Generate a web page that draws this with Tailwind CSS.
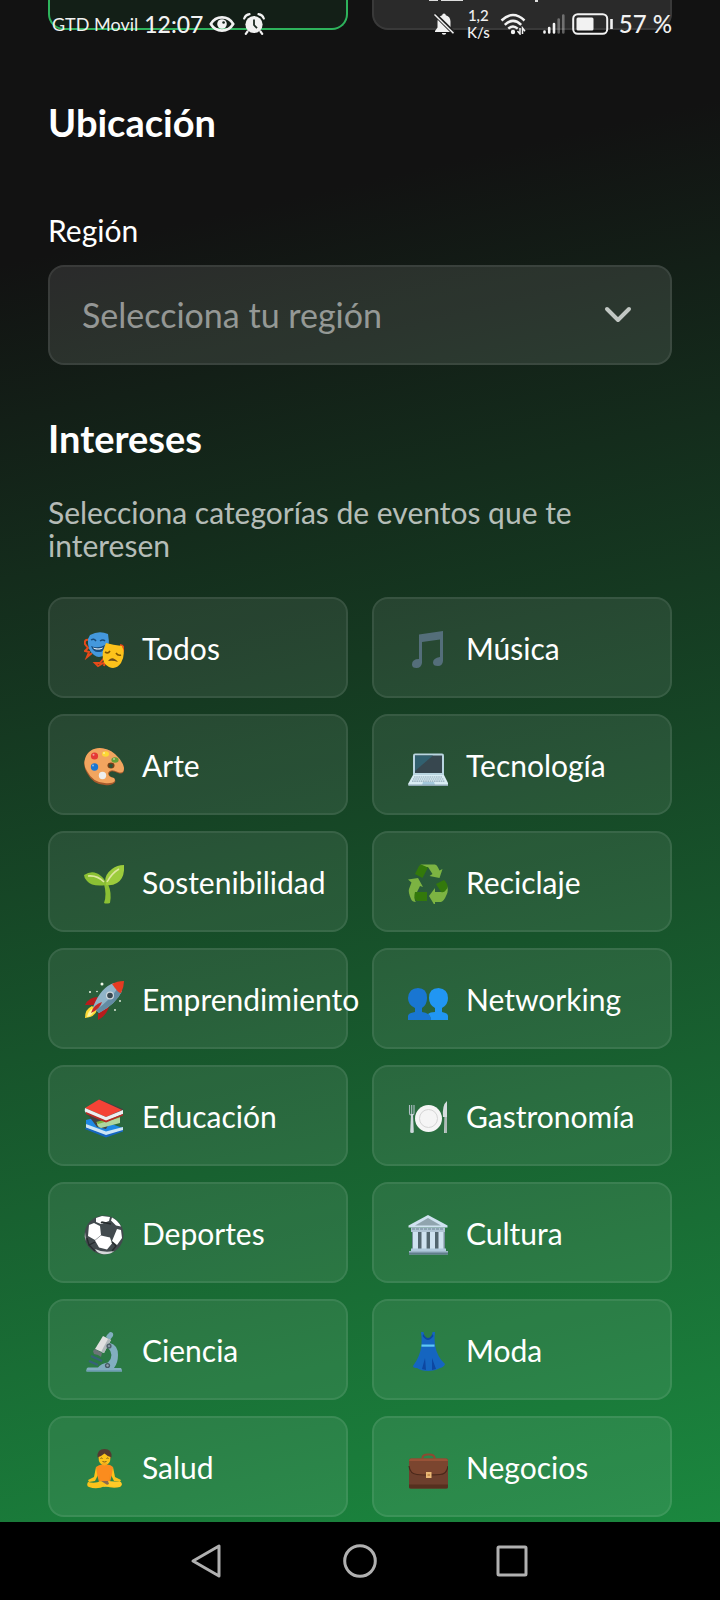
<!DOCTYPE html>
<html lang="es">
<head>
<meta charset="utf-8">
<meta name="viewport" content="width=device-width, initial-scale=1">
<title>Ubicación e intereses</title>
<script src="https://cdn.jsdelivr.net/npm/@tailwindcss/browser@4"></script>
</head>
<body class="relative flex min-h-screen flex-col overflow-x-hidden bg-[linear-gradient(167deg,#121212_15%,#1b883f_96%)] font-['Lato','Open_Sans',sans-serif] text-white">

<!-- Status bar over the scrolled content -->
<header class="absolute inset-x-0 top-0 flex h-12 items-center justify-between pr-12 pl-[52px] text-[#f2f2f2]">
  <div class="flex items-center">
    <span class="text-[18px] leading-6">GTD Movil</span>
    <span class="ml-[6px] text-[23px] leading-6 font-medium">12:07</span>
    <svg class="ml-[6px] h-[18px] w-[26px]" viewBox="0 0 26 18" fill="none"><path d="M1.800 9C7 .2 19 .2 24.200 9 19 17.800 7 17.800 1.800 9Z" stroke="currentColor" stroke-width="2.600"/><circle cx="13" cy="9" r="4.800" fill="currentColor"/><circle cx="14.600" cy="7.500" r="1.300" fill="#13251b"/></svg>
    <svg class="ml-2 h-[22px] w-[22px]" viewBox="0 0 22 22" fill="none"><circle cx="11" cy="11.500" r="8.600" fill="currentColor"/><path d="M1.200 5.500Q2.500 1.800 6.500 1.200M20.800 5.500Q19.500 1.800 15.500 1.200M4.500 18.500 2.800 20.800M17.500 18.500l1.700 2.300" stroke="currentColor" stroke-width="2.200" stroke-linecap="round"/><path d="M11 6.500v5.500l3 3.200" stroke="#1c2a22" stroke-width="1.800"/></svg>
  </div>
  <div class="flex items-center">
    <svg class="h-[22px] w-[22px]" viewBox="0 0 22 22" fill="none"><path d="M11 .5a1.800 1.800 0 0 1 1.800 1.700C16 3 17.500 5.500 17.500 8.500v6L20 18v1H2v-1l2.500-3.500v-6C4.500 5.500 6 3 9.200 2.200A1.800 1.800 0 0 1 11 .5ZM8.800 20h4.400a2.200 1.800 0 0 1-4.400 0Z" fill="currentColor"/><path d="M1.800 1.200 20.800 20" stroke="#222" stroke-width="4"/><path d="M1.500 1.500 20.500 20.300" stroke="currentColor" stroke-width="1.500"/></svg>
    <span class="ml-3 text-center text-[15px] leading-[17px] font-medium">1,2<br>K/s</span>
    <svg class="ml-[10px] h-[22px] w-[26px]" viewBox="0 0 26 22" fill="none"><path d="M1.500 7.500Q13-3.500 24.500 7.500M4.800 11.800Q13 4 21.200 11.800M8.300 15.700Q13 11.400 17.700 15.700" stroke="currentColor" stroke-width="2.500"/><circle cx="13" cy="19" r="2.200" fill="currentColor"/><path d="M20 15v6l-2.500-3M22.500 21v-6l2.500 3.200" stroke="currentColor" stroke-width="1.500"/></svg>
    <svg class="ml-[17px] h-[22px] w-[22px]" viewBox="0 0 22 22" stroke="currentColor" stroke-width="2.600" stroke-linecap="round"><path d="M1.500 18.500v1M6.200 15v4.500M11 11v8.500"/><path d="M15.700 6.500v13M20.300 2.500v17" opacity=".35"/></svg>
    <svg class="ml-[7px] h-[22px] w-[42px]" viewBox="0 0 42 22" fill="none"><rect x="1.200" y="1.200" width="34" height="19.600" rx="4.500" stroke="currentColor" stroke-width="2"/><rect x="4.500" y="4.500" width="17" height="13" rx="1.500" fill="currentColor"/><path d="M39.500 6v10" stroke="currentColor" stroke-width="2.600"/></svg>
    <span class="ml-[5px] text-[24px] leading-6 font-medium">57 %</span>
  </div>
</header>

<main class="px-12">
  <!-- Lower ends of the scrolled-away cards -->
  <div class="grid grid-cols-2 gap-6">
    <div class="h-[30px] rounded-b-2xl border-2 border-t-0 border-[#2eb35c] bg-[#22c55e]/8"></div>
    <div class="h-[30px] rounded-b-2xl border-2 border-t-0 border-white/8 bg-white/10">
      <svg class="ml-[54px] h-[3px] w-[114px]" viewBox="0 0 114 3" fill="#ddd"><path d="M1 0h9v1H1zM13 0h22v1H13zM107 0h3v2h-3z"/></svg>
    </div>
  </div>

  <h2 class="mt-[70px] text-[38px] leading-[44px] font-bold">Ubicación</h2>
  <label for="region" class="mt-[69px] block text-[30px] leading-[34px]">Región</label>
  <div class="mt-[18px] grid items-center">
    <select id="region" class="col-start-1 row-start-1 h-[100px] w-full appearance-none rounded-2xl border-2 border-white/8 bg-white/10 px-8 pb-[2px] text-[34px] text-white/50">
      <option>Selecciona tu región</option>
    </select>
    <svg class="pointer-events-none col-start-1 row-start-1 mr-[38px] h-8 w-8 justify-self-end" viewBox="0 0 32 32" fill="none" stroke="#c1c7c3" stroke-width="4" stroke-linecap="round" stroke-linejoin="round"><path d="M5 10 16 21 27 10"/></svg>
  </div>

  <h2 class="mt-[51px] text-[38px] leading-[44px] font-bold">Intereses</h2>
  <p class="mt-9 text-[30px] leading-[33px] text-white/70">Selecciona categorías de eventos que te interesen</p>

  <div class="mt-[35px] mb-[5px] grid grid-cols-2 gap-x-6 gap-y-4 text-[30px] leading-[34px]">
    <button type="button" class="flex h-[101px] min-w-0 items-center gap-[18px] rounded-2xl border-2 border-white/8 bg-white/8 pl-[34px] whitespace-nowrap">
      <svg class="h-11 w-10 shrink-0" viewBox="0 -4 40 44"><path d="M5 10Q0 9 1 14L4 18 1 21 5 22 3 27 8 23M36 15Q41 16 39 21L37 24M20 28 16 33 11 33 14 36 21 32 20 36" fill="none" stroke="#e64a19" stroke-width="2"/><path d="M6 5Q15 0 24 4 27 19 20 25 15 29 10 25 3 20 4 9Z" fill="#4498dd"/><path d="M7 10q3-2 5 1M16 11q3-2 5 0" fill="none" stroke="#174c7c" stroke-width="1.500"/><path d="M7 16q7 3 14-1-1 8-7 7-5 0-7-6" fill="#174c7c"/><path d="M9 17.500q5 2 10 0-1 2-5 2-4 0-5-2" fill="#fff"/><path d="M22 13Q29 15 38 16 42 24 37 33 32 40 25 37 17 33 19 21Z" fill="#fdc21b"/><path d="M21 22q3 2 5-1M32 23q2 3 5 2" fill="none" stroke="#805500" stroke-width="1.600"/><path d="M24 31q4-6 10 1-5-2-10-1Z" fill="#6d4c1b"/></svg>
      <span>Todos</span>
    </button>
    <button type="button" class="flex h-[101px] min-w-0 items-center gap-[18px] rounded-2xl border-2 border-white/8 bg-white/8 pl-[34px] whitespace-nowrap">
      <svg class="h-11 w-10 shrink-0" viewBox="0 -4 40 44"><path d="M11 4.500 35 1v30q-.5 5-5 5-5 0-5-3.500 0-4.500 7-5.500V9.500L14 12v21q-.8 5-5.500 5Q4 38 4 34.500 4 29 11 29Z" fill="#546e7a"/></svg>
      <span>Música</span>
    </button>
    <button type="button" class="flex h-[101px] min-w-0 items-center gap-[18px] rounded-2xl border-2 border-white/8 bg-white/8 pl-[34px] whitespace-nowrap">
      <svg class="h-11 w-10 shrink-0" viewBox="0 -4 40 44"><path d="M1 13C4-1 21-2 31 8q8 8 9 14 0 6-6 4-8-4-9 1 0 3 5 4 4 5-4 7Q10 40 3 26-1 20 1 13Z" fill="#a65a2c"/><path d="M1 12C5-1 20-2 31 7q8 7 9 14 0 6-6 4-8-4-10 1 0 4 6 5 3 4-4 5Q10 38 3 24-1 18 1 12Z" fill="#f2a55f"/><ellipse cx="27" cy="18.500" rx="3.500" ry="3" fill="#744019"/><path d="M25 18q2-2 4 0l-1 3q-3 0-3-3" fill="#28553a"/><circle cx="10.500" cy="9" r="3.600" fill="#e53935"/><ellipse cx="21.500" cy="7" rx="3.500" ry="2.700" fill="#fdd835"/><ellipse cx="31" cy="13" rx="3.600" ry="2.800" fill="#689f38"/><circle cx="10.500" cy="20" r="3.700" fill="#1976d2"/><circle cx="18.500" cy="28.500" r="3.700" fill="#eee"/><g fill="#fff" opacity=".5"><circle cx="9.500" cy="7.800" r="1"/><circle cx="20" cy="6" r="1"/><circle cx="30" cy="12" r="1"/><circle cx="9" cy="18.500" r="1"/></g></svg>
      <span>Arte</span>
    </button>
    <button type="button" class="flex h-[101px] min-w-0 items-center gap-[18px] rounded-2xl border-2 border-white/8 bg-white/8 pl-[34px] whitespace-nowrap">
      <svg class="h-11 w-10 shrink-0" viewBox="0 -4 40 44"><path d="M7 6.500h27q2 0 2 2V28H5V8.500q0-2 2-2Z" fill="#b9d5e0"/><path d="M7 8.500h27V26H7Z" fill="#37474f"/><path d="M7 8.500h18L7 24Z" fill="#31606f"/><path d="M5 28h31l4.500 9q0 2-2 2h-36Q0 39 0 37Z" fill="#d9edf4"/><path d="M6 30h28.500M5 32h31M4 34.200h33" stroke="#90a9b6" stroke-width="1.200" stroke-dasharray="1.600 .6"/><path d="M15 35h11l1 3H14Z" fill="#a4c9dc"/><path d="M0 37.500h40.500q0 1.500-2 1.500h-36Q0 39 0 37.500" fill="#8da7b2"/></svg>
      <span>Tecnología</span>
    </button>
    <button type="button" class="flex h-[101px] min-w-0 items-center gap-[18px] rounded-2xl border-2 border-white/8 bg-white/8 pl-[34px] whitespace-nowrap">
      <svg class="h-11 w-10 shrink-0" viewBox="0 -4 40 44"><path d="M20 20h4q4 9 2 19-4 1-6 0 3-8 0-19Z" fill="#8bc034"/><path d="M0 11q9-6 17 1 5 4 5 9Q8 23 3 17 0 14 0 11Z" fill="#8bc034"/><path d="M22 21Q19 12 28 5 33 1 40 1q1 13-7 18-5 3-11 2Z" fill="#9ccc3c"/><path d="M4 12q9-1 16 6" fill="none" stroke="#dde7a0" stroke-width="1.500"/><path d="M23 18Q28 9 35 5" fill="none" stroke="#dde7a0" stroke-width="1.500"/></svg>
      <span>Sostenibilidad</span>
    </button>
    <button type="button" class="flex h-[101px] min-w-0 items-center gap-[18px] rounded-2xl border-2 border-white/8 bg-white/8 pl-[34px] whitespace-nowrap">
      <svg class="h-11 w-10 shrink-0" viewBox="0 -4 40 44"><path d="M13 .5h14q2 .5 3 3l1.500 3 3-1.500-3 9-10-2 3-2L20 3h-9Z" fill="#7cb342"/><path d="m13 .5 7 3-5.500 10.500L7 10l4-8Z" fill="#33790b"/><path d="M0 15.500 10 14l5 9-3-1-5 10q-1 4 1 6-4 0-5-3-3-7-2-10l2.500-6.500Z" fill="#7cb342"/><path d="M7 28h12v9H9q-4-2-2-9Z" fill="#33790b"/><path d="m21 32 6-8v4h7q4-1 5-6 2 5-1 10-2 5-5 6h-6v4Z" fill="#7cb342"/><path d="m28 20 8-4q6 6 2 10-2 3-5 2Z" fill="#33790b"/></svg>
      <span>Reciclaje</span>
    </button>
    <button type="button" class="flex h-[101px] min-w-0 items-center gap-[18px] rounded-2xl border-2 border-white/8 bg-white/8 pl-[34px] whitespace-nowrap">
      <svg class="h-11 w-10 shrink-0" viewBox="0 -4 40 44"><path d="M1 24q4-8 13-8l-3 8ZM14 39q8-4 11-13l-8 1-3 6Z" fill="#b71c1c"/><path d="M1 37q0-9 7-12l5 4q-2 7-12 8Z" fill="#fdd835"/><path d="M3 36q1-6 5-8l2 2q-2 5-7 6Z" fill="#fff59d"/><path d="M9 26Q17 6 30 2q2 5 8 8-6 13-23 22Z" fill="#90b4c8"/><path d="M12 29Q25 20 34 7l4 3q-6 13-23 22Z" fill="#638ba3"/><path d="M28 3q5-3 12-3 0 6-3 12-2 1-9-9Z" fill="#e53b22"/><circle cx="26" cy="14.500" r="4" fill="#cfd8dc"/><circle cx="26" cy="14.500" r="2.800" fill="#37474f"/><path d="M7 32q2-8 11-11-2 7-11 11Z" fill="#c62828"/><g fill="#eef7e8"><circle cx="18" cy="3" r="1.500"/><circle cx="6" cy="11" r="1"/><circle cx="13" cy="10.500" r=".8"/><circle cx="36" cy="20" r=".9"/><circle cx="31" cy="29" r=".9"/></g></svg>
      <span>Emprendimiento</span>
    </button>
    <button type="button" class="flex h-[101px] min-w-0 items-center gap-[18px] rounded-2xl border-2 border-white/8 bg-white/8 pl-[34px] whitespace-nowrap">
      <svg class="h-11 w-10 shrink-0" viewBox="0 -4 40 44"><path d="M10 7q9 0 9 10 0 7-5 10v4q9 1 9 8H0v-4q0-3 7-4v-4Q0 24 0 17 1 7 10 7Z" fill="#1976d2"/><path d="M30.500 7Q40 8 40 17q0 7-6 10v4q6 1 6 4v4H23q0-4-3-6 2-2 7-2v-4q-6-3-6-10 0-10 9.500-10Z" fill="#2196f3"/></svg>
      <span>Networking</span>
    </button>
    <button type="button" class="flex h-[101px] min-w-0 items-center gap-[18px] rounded-2xl border-2 border-white/8 bg-white/8 pl-[34px] whitespace-nowrap">
      <svg class="h-11 w-10 shrink-0" viewBox="0 -4 40 44"><path d="m15 1 24 10-2 5-14 8-6-4Z" fill="#424242"/><path d="m2 22 8-2 29 10-17 7L2 26Z" fill="#1e88e5"/><path d="m2 26 20 7.500 17-4.500v4L22 38 2 30Z" fill="#cce4f4"/><path d="M2 29.500 22 37l17-5v1.500L22 39.500 1 31Z" fill="#1565c0"/><path d="m4 17 9 12 9 2 4-7Z" fill="#424242"/><path d="m13 25 23-6v6l-19 5q-4-1-4-5Z" fill="#aed6a0"/><path d="m12 24 23-6 1 1.500L14 26Z" fill="#7cb342"/><path d="M1 10 15 1.500 38 12 22 19Z" fill="#f44336"/><path d="m1 10 21 9 17-7v4l-17 7L2 15Q0 13 1 10Z" fill="#eceff1"/><path d="m2 14 20 8.500L39 16v1.500L22 24.500 2 16Z" fill="#b52a26"/></svg>
      <span>Educación</span>
    </button>
    <button type="button" class="flex h-[101px] min-w-0 items-center gap-[18px] rounded-2xl border-2 border-white/8 bg-white/8 pl-[34px] whitespace-nowrap">
      <svg class="h-11 w-10 shrink-0" viewBox="0 -4 40 44"><circle cx="20.500" cy="20.500" r="13.500" fill="#f5f5f5"/><circle cx="20.500" cy="20.500" r="9" fill="none" stroke="#d5d5d5"/><path d="M1.500 7v8q0 2 1.500 2M6 7v8q0 2-1.500 2M3.700 7v9" fill="none" stroke="#b0bec5" stroke-width="1.100"/><path d="M3 16h2l.8 18q0 1-1.800 1t-1.800-1Z" fill="#cfd8dc"/><path d="M39 3v32h-3l.8-16H35Q34 7 39 3Z" fill="#d6dddf"/><path d="M36.500 19H39v16h-2.500Z" fill="#aebbb8"/></svg>
      <span>Gastronomía</span>
    </button>
    <button type="button" class="flex h-[101px] min-w-0 items-center gap-[18px] rounded-2xl border-2 border-white/8 bg-white/8 pl-[34px] whitespace-nowrap">
      <svg class="h-11 w-10 shrink-0" viewBox="0 -4 40 44"><circle cx="20" cy="20" r="19.500" fill="#424a4e"/><g fill="#fff"><path d="m12 3 6-2 8 1-1 4-8 3-5-2ZM28 2.500q6 3 9 9l-5-1-5-5ZM5 10l5-2 6 3 1 9-6 5-7-4ZM17 20.500l9 2 2 6-5 6-8-2-4-7ZM33 14l4 1 1 8-5 7-5-4Z"/></g><path d="M11 34q8 4 19 2-4 4-12 3-5-1-7-5M1 17l1 9q-2-4-1-9Z" fill="#d5d8d9"/><path d="m17 8 1-1 9 2M28 27l4 4-4 5M3 23l2 7 6-3M5 30l6 6" fill="none" stroke="#262b2d" stroke-width="1.300"/></svg>
      <span>Deportes</span>
    </button>
    <button type="button" class="flex h-[101px] min-w-0 items-center gap-[18px] rounded-2xl border-2 border-white/8 bg-white/8 pl-[34px] whitespace-nowrap">
      <svg class="h-11 w-10 shrink-0" viewBox="0 -4 40 44"><path d="M4 17h33v18H4Z" fill="#78909c"/><path d="M10 17h4v18h-4zM18.500 17h4v18h-4zM27 17h4v18h-4z" fill="#52656f"/><path d="M20 0 39.500 10.500v2h-39v-2Z" fill="#cfe2f0"/><path d="M20 3 33 10.500H7Z" fill="#90a4ae"/><path d="M3 12.500h34V17H3Z" fill="#b0c4d4"/><path d="M4 14h32" stroke="#6d8594" stroke-dasharray="3 1"/><g fill="#cfe2f0"><path d="M5 17h5v18H5zM13.500 17h5v18h-5zM22 17h5v18h-5zM30.500 17h5v18h-5z"/></g><path d="M3 33.500h35V36H3Z" fill="#b0c9dc"/><path d="M1 36h39v3.500H1Z" fill="#9db7c9"/><path d="M1 37.500h39v2H1Z" fill="#607d8b"/></svg>
      <span>Cultura</span>
    </button>
    <button type="button" class="flex h-[101px] min-w-0 items-center gap-[18px] rounded-2xl border-2 border-white/8 bg-white/8 pl-[34px] whitespace-nowrap">
      <svg class="h-11 w-10 shrink-0" viewBox="0 -4 40 44"><path d="m23 3 3-3q4 0 3 4l-3 4-4-3Z" fill="#82aec0"/><path d="M26 11q8 2 8 12 0 8-4 13h7q1 1 1 3.500H2.500Q2 36 4 35.500h10q3-4 10-5 7-7 0-15Z" fill="#82aec0"/><path d="m19 4 8 4-7 13-9-4Z" fill="#e0e0e0"/><path d="m24 7 3 1-7 13-3-1Z" fill="#b0b8bb"/><path d="m11 17 7 4-1 4-3-2-4-1-1-3Z" fill="#6b7477"/><circle cx="25" cy="14" r="2.600" fill="#4f616b"/><circle cx="25" cy="14" r="1.100" fill="#90a4ae"/><path d="m7 24 11 5M5 29l9 4" stroke="#37617a" stroke-width="2.200"/><circle cx="23.500" cy="33.500" r="2.600" fill="#455a64"/><circle cx="23.500" cy="33.500" r="1.200" fill="#90a4ae"/><path d="M2.500 38h35.500v1.500H2.500Z" fill="#6f9db4"/></svg>
      <span>Ciencia</span>
    </button>
    <button type="button" class="flex h-[101px] min-w-0 items-center gap-[18px] rounded-2xl border-2 border-white/8 bg-white/8 pl-[34px] whitespace-nowrap">
      <svg class="h-11 w-10 shrink-0" viewBox="0 -4 40 44"><path d="M13 0h2.500q1 6 4.500 7 4-1 4.500-7H27q-1 6 0 13 2 12 10 19-1 3-5 4-5 3-12 3T9 36q-4 0-4-2 7-9 8.500-21Q14 6 13 0Z" fill="#1565c0"/><path d="M14.500 4q3 4 5.500 4t5.500-4l-1-2q-2 4-4.500 4t-4.500-4ZM17 26l-3 11 4 1ZM24 26l0 12 4-1Z" fill="#0d47a1"/><path d="M13.500 12.500h13v2.200h-13Z" fill="#5fc8f4"/></svg>
      <span>Moda</span>
    </button>
    <button type="button" class="flex h-[101px] min-w-0 items-center gap-[18px] rounded-2xl border-2 border-white/8 bg-white/8 pl-[34px] whitespace-nowrap">
      <svg class="h-11 w-10 shrink-0" viewBox="0 -4 40 44"><path d="M13.500 8Q13 0 20.500 0T27.500 8L26 10H15Z" fill="#543930"/><path d="M14.500 8q3-1 6-3.500 2.500 2.500 6 3.500 0 8-6 8t-6-8Z" fill="#fcc21b"/><path d="M16.500 9.500q1-1 2 0M22.500 9.500q1-1 2 0M18.500 12.500q2 1 4 0" fill="none" stroke="#6d4c1b" stroke-width=".9"/><path d="M18 14h5v4h-5Z" fill="#f5ad1b"/><path d="m12 18-2 10-6 3 1 2 6-1 4-8ZM29 18l2 10 6 3-1 2-6-1-4-8Z" fill="#fcc21b"/><path d="M12 18q3-2.500 6-2.500 2.500 2 5 0 4 0 6 2.500l-1 7-2 8H15l-2-8Z" fill="#fb8c1e"/><path d="m15 25 1 8h9l1-8-1 10h-9Z" fill="#e06c16"/><path d="M16 32h9v4h-9Z" fill="#8c6b50"/><path d="M4 33q7 2 13-1l8 5q5 0 12-3 2 2-1 4-7 2-15-1-8 4-16 1-3-1-1-5Z" fill="#fcc21b"/><path d="m24 32 13 1q2 3-2 5-10-1-17 0l7-3Z" fill="#ffca28"/></svg>
      <span>Salud</span>
    </button>
    <button type="button" class="flex h-[101px] min-w-0 items-center gap-[18px] rounded-2xl border-2 border-white/8 bg-white/8 pl-[34px] whitespace-nowrap">
      <svg class="h-11 w-10 shrink-0" viewBox="0 -4 40 44"><path d="M14.500 10V8q1-2.500 5-2.500h2q4 0 5 2.500v2" fill="none" stroke="#8d4a32" stroke-width="2"/><rect x="1" y="10" width="39" height="29.500" rx="2" fill="#6d3f2d"/><path d="M1 35.500h39V38q0 1.500-1.500 1.500h-36Q1 39.500 1 38Z" fill="#56301f"/><path d="M3 9.500h35q2 0 2 2V20q-1 6-8 6-12 1-23 0-7 0-8-6v-8.500q0-2 2-2Z" fill="#7b452f"/><path d="M1 17q1 8 8 8.500 12 1 23 0 7-.5 8-8.500" fill="none" stroke="#4a281b" stroke-width="1.200"/><path d="M1 12q0-2.500 2-2.500h35q2 0 2 2.500Z" fill="#995237"/><path d="M18 23h5.500v6H18Z" fill="#eab875"/><path d="M19.500 25h2.500v2h-2.500Z" fill="#c98d4c"/></svg>
      <span>Negocios</span>
    </button>
  </div>
</main>

<!-- System navigation -->
<nav class="mt-auto flex h-[78px] items-center justify-center gap-[117px] bg-black" aria-label="Navegación del sistema">
  <button type="button" aria-label="Atrás"><svg class="h-9 w-9" viewBox="0 0 36 36" fill="none" stroke="#b0b0b0" stroke-width="3" stroke-linejoin="round"><path d="M30 3v30L4 18Z"/></svg></button>
  <button type="button" aria-label="Inicio"><svg class="h-9 w-9" viewBox="0 0 36 36" fill="none" stroke="#b0b0b0" stroke-width="3"><circle cx="18" cy="18" r="15.300"/></svg></button>
  <button type="button" aria-label="Recientes"><svg class="h-9 w-9" viewBox="0 0 36 36" fill="none" stroke="#b0b0b0" stroke-width="3" stroke-linejoin="round"><rect x="3" y="4" width="28" height="28" rx="1"/></svg></button>
</nav>
</body>
</html>
